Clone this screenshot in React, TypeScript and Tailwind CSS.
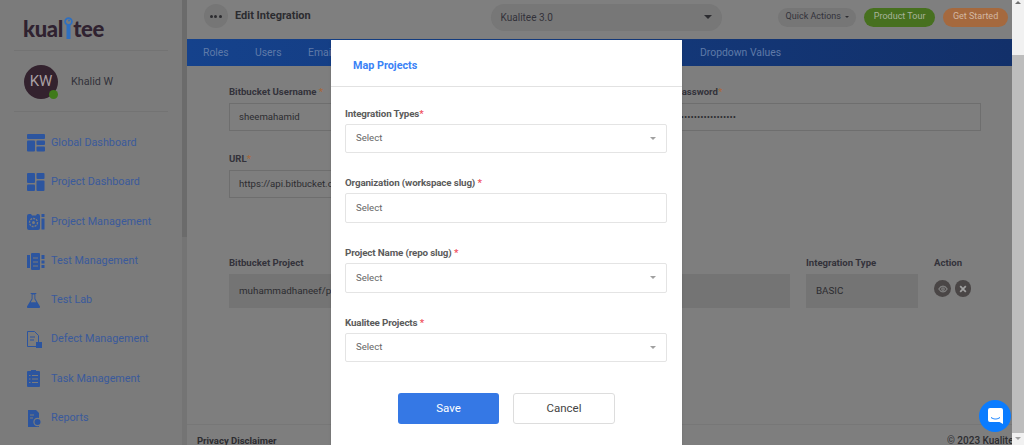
import React from 'react';

const BLUE = '#2c559f';

const navItems: { label: string; icon: React.ReactNode }[] = [
  {
    label: 'Global Dashboard',
    icon: (
      <svg width="18" height="18" viewBox="0 0 18 18" fill={BLUE}>
        <rect x="0" y="0" width="18" height="5" rx="1" />
        <rect x="0" y="6.5" width="8" height="11" rx="1" />
        <rect x="9.5" y="6.5" width="8.5" height="4.5" rx="1" />
        <rect x="9.5" y="12.5" width="8.5" height="5" rx="1" />
      </svg>
    ),
  },
  {
    label: 'Project Dashboard',
    icon: (
      <svg width="18" height="18" viewBox="0 0 18 18" fill={BLUE}>
        <rect x="0" y="0" width="8" height="10" rx="1" />
        <rect x="0" y="11.5" width="8" height="6.5" rx="1" />
        <rect x="9.5" y="0" width="8" height="6" rx="1" />
        <rect x="9.5" y="7.5" width="8" height="10.5" rx="1" />
      </svg>
    ),
  },
  {
    label: 'Project Management',
    icon: (
      <svg width="18" height="18" viewBox="0 0 18 18" fill={BLUE}>
        <path d="M0 3a2 2 0 0 1 2-2h2l1 1.500h4L10 1h1a2 2 0 0 1 2 2v12a2 2 0 0 1-2 2H2a2 2 0 0 1-2-2z" />
        <circle cx="6.500" cy="9.500" r="4" fill="none" stroke="#7b7b7b" strokeWidth="1.300" strokeDasharray="2 1" />
        <circle cx="6.500" cy="9.500" r="1.500" fill="#7b7b7b" />
        <rect x="14.500" y="1" width="3" height="3" />
        <rect x="14.500" y="5.500" width="3" height="11" />
      </svg>
    ),
  },
  {
    label: 'Test Management',
    icon: (
      <svg width="18" height="18" viewBox="0 0 18 18" fill={BLUE}>
        <rect x="0" y="3" width="3" height="13" />
        <rect x="4" y="1" width="9" height="17" rx="1" />
        <rect x="14.500" y="3" width="3" height="4" />
        <rect x="14.500" y="8.500" width="3" height="3" />
        <rect x="14.500" y="13" width="3" height="3" />
        <path d="M6 6h5M6 10h5M6 14h5" stroke="#7b7b7b" strokeWidth="1.200" />
      </svg>
    ),
  },
  {
    label: 'Test Lab',
    icon: (
      <svg width="13" height="15" viewBox="0 0 14 16" fill={BLUE}>
        <path d="M4 0h6v1H9v5l5 8.500a1 1 0 0 1-1 1.500H1a1 1 0 0 1-1-1.500L5 6V1H4z" />
        <path d="M6 1.500h2v5l2 3.500H4l2-3.500z" fill="#7b7b7b" />
      </svg>
    ),
  },
  {
    label: 'Defect Management',
    icon: (
      <svg width="16" height="17" viewBox="0 0 16 17" fill="none" stroke={BLUE} strokeWidth="1">
        <path d="M.5.500h7l4 4v11h-11z" />
        <path d="M3 6h5M3 9h4" />
        <rect x="9.500" y="11.500" width="5" height="5" fill={BLUE} />
      </svg>
    ),
  },
  {
    label: 'Task Management',
    icon: (
      <svg width="14" height="17" viewBox="0 0 14 17" fill={BLUE}>
        <rect x="0" y="1" width="13" height="16" rx="1" />
        <rect x="4" y="0" width="5" height="2" />
        <path d="M5 5.500h6M5 9h6M5 12.500h6M2 5.500h1.500M2 9h1.500M2 12.500h1.500" stroke="#7b7b7b" strokeWidth="1.200" />
      </svg>
    ),
  },
  {
    label: 'Reports',
    icon: (
      <svg width="15" height="17" viewBox="0 0 15 17" fill={BLUE}>
        <path d="M1 0h8l3 3v14H1z" />
        <circle cx="10.500" cy="12" r="4.200" fill="#7b7b7b" />
        <circle cx="10.500" cy="12" r="3" />
        <path d="M3 5h4M3 8h3" stroke="#7b7b7b" strokeWidth="1.200" />
      </svg>
    ),
  },
];

const Sidebar = () => (
  <aside className="w-[182px] shrink-0 bg-[#7b7b7b] px-[14px]">
    <div className="h-[51px] border-b border-[#737373] pl-[9px] pt-[17px]">
      <div className="flex items-end h-[24px] text-[#2f2230] text-[22px] leading-[24px] font-black font-['Lato',sans-serif] tracking-[-0.3px]">
        kual
        <svg width="9" height="24" viewBox="0 0 9 24" className="mx-[0.5px] shrink-0" fill="none">
          <circle cx="4.500" cy="4.500" r="3.400" stroke="#2e6fc0" strokeWidth="1.800" />
          <circle cx="5" cy="3.500" r="1" fill="#2e6fc0" />
          <rect x="2.500" y="8" width="4" height="14" fill="#2e6fc0" />
        </svg>
        tee
      </div>
    </div>
    <div className="h-[61px] border-b border-[#737373] flex items-center pl-[10px] pt-[1px] gap-[13px]">
      <div className="relative w-[34px] h-[34px] rounded-full bg-[#33222e] flex items-center justify-center text-[#a89fa3] text-[15px]">
        KW
        <span className="absolute right-0 bottom-0 w-[9px] h-[9px] rounded-full bg-[#3f7a1a]" />
      </div>
      <span className="text-[#33323a] text-[10.800px] pt-[1px]">Khalid W</span>
    </div>
    <nav className="pl-[13px] pt-[11.400px] flex flex-col">
      {navItems.map((item) => (
        <div key={item.label} className="h-[39.300px] flex items-center shrink-0">
          <div className="w-[24px] flex items-center">{item.icon}</div>
          <span className="text-[#3a5a9c] text-[10.800px] whitespace-nowrap">{item.label}</span>
        </div>
      ))}
    </nav>
  </aside>
);

const Field = ({ label, value, className }: { label: React.ReactNode; value: string; className: string }) => (
  <div className={className}>
    <div className="text-[9.600px] leading-[12px] font-bold text-[#33323a] mb-[5px]">{label}</div>
    <div className="h-[28px] border border-[#6e6e6e] px-[9px] flex items-center text-[9.600px] text-[#2c2c30] whitespace-nowrap overflow-hidden">
      {value}
    </div>
  </div>
);

const Cell = ({ title, value, className }: { title: string; value: string; className: string }) => (
  <div className={className}>
    <div className="text-[9.600px] leading-[12px] font-bold text-[#33323a] mb-[5px]">{title}</div>
    <div className="h-[34px] bg-[#747474] px-[10px] flex items-center text-[9.800px] text-[#2c2c30]">{value}</div>
  </div>
);

const Main = () => (
  <main className="flex-1 flex flex-col min-w-0 bg-[#7e7e7e]">
    <header className="h-[39px] shrink-0 bg-[#7f7f7f] flex items-center pl-[17px] pr-[4px] pb-[5px]">
      <div className="w-[24px] h-[24px] mb-[2px] rounded-full bg-[#767676] flex items-center justify-center text-[#2c2c30] gap-[1.500px]">
        <span className="w-[3px] h-[3px] rounded-full bg-[#2c2c30]" />
        <span className="w-[3px] h-[3px] rounded-full bg-[#2c2c30]" />
        <span className="w-[3px] h-[3px] rounded-full bg-[#2c2c30]" />
      </div>
      <span className="ml-[7px] mb-[2px] text-[11px] font-bold text-[#2c2c30] w-[256px]">Edit Integration</span>
      <div className="w-[232px] h-[27px] rounded-full bg-[#777777] flex items-center justify-between pl-[10px] pr-[10px] text-[10px] text-[#33323a]">
        Kualitee 3.0
        <span className="border-x-[4px] border-t-[4px] border-x-transparent border-t-[#2c2c30]" />
      </div>
      <div className="ml-[56px] w-[78px] h-[19px] rounded-full bg-[#767676] flex items-center justify-center gap-[4px] text-[9px] text-[#33323a]">
        Quick Actions
        <span className="border-x-[2.500px] border-t-[2.500px] border-x-transparent border-t-[#2c2c30]" />
      </div>
      <div className="ml-[8px] w-[71px] h-[19px] rounded-full bg-[#47701f] flex items-center justify-center text-[9px] text-[#a9b49c]">
        Product Tour
      </div>
      <div className="ml-[8px] w-[65px] h-[19px] rounded-full bg-[#a5693e] flex items-center justify-center text-[9px] text-[#d3b8a2]">
        Get Started
      </div>
    </header>
    <div className="h-[27px] shrink-0 bg-linear-to-r from-[#15428c] to-[#12306a] flex items-center text-[10.400px] text-[#5f7aa8] pl-[16px]">
      <span className="w-[52px]">Roles</span>
      <span className="w-[53px]">Users</span>
      <span className="w-[392px]">Email</span>
      <span>Dropdown Values</span>
    </div>
    <div className="flex-1 flex flex-col pl-[42px] pr-[31px] pt-[20px]">
      <div className="flex justify-between">
        <Field
          className="w-[349px]"
          label={<>Bitbucket Username <span className="text-[#a5693e]">*</span></>}
          value="sheemahamid"
        />
        <Field
          className="w-[349px]"
          label={<>Bitbucket Password<span className="text-[#a5693e]">*</span></>}
          value="•••••••••••••••••••••••••••••"
        />
      </div>
      <div className="flex mt-[22px]">
        <Field
          className="w-[349px]"
          label={<>URL<span className="text-[#a5693e]">*</span></>}
          value="https://api.bitbucket.org/2.0"
        />
      </div>
      <div className="flex mt-[59px] mr-[-21px]">
        <Cell className="w-[561px] mr-[16px]" title="Bitbucket Project" value="muhammadhaneef/project" />
        <Cell className="w-[112px] mr-[16px]" title="Integration Type" value="BASIC" />
        <div className="flex-1">
          <div className="text-[9.600px] leading-[12px] font-bold text-[#33323a] mb-[5px]">Action</div>
          <div className="flex gap-[4px] pt-[6px]">
            <span className="w-[17px] h-[17px] rounded-full bg-[#4a4646] flex items-center justify-center">
              <svg width="10" height="10" viewBox="0 0 24 24" fill="none" stroke="#7e7e7e" strokeWidth="3">
                <path d="M2 12s4-7 10-7 10 7 10 7-4 7-10 7-10-7-10-7z" />
                <circle cx="12" cy="12" r="3" />
              </svg>
            </span>
            <span className="w-[16px] h-[17px] rounded-full bg-[#4a4646] flex items-center justify-center">
              <svg width="8" height="8" viewBox="0 0 10 10" stroke="#a0a0a0" strokeWidth="2.200">
                <path d="M1.500 1.500l7 7M8.500 1.500l-7 7" />
              </svg>
            </span>
          </div>
        </div>
      </div>
    </div>
    <footer className="h-[21px] shrink-0 border-t border-[#777777] flex justify-between pl-[10px] pt-[10px] text-[9.500px] leading-[12px] font-bold text-[#2c2c30] whitespace-nowrap overflow-hidden">
      <span>Privacy Disclaimer</span>
      <span className="text-[10px] font-medium w-[65px] overflow-hidden">© 2023 Kualitee</span>
    </footer>
  </main>
);

const ModalField = ({ label, sep, select, mt }: { label: string; sep: string; select: boolean; mt: string }) => (
  <div className={mt}>
    <div className="text-[9.800px] leading-[13px] font-bold tracking-[-0.15px] text-[#5b5b5b]">
      {label}
      {sep}
      <span className="text-[#f0525f]">*</span>
    </div>
    <div className="mt-[4px] h-[29.700px] border border-[#e4e4e4] rounded-[2px] flex items-center justify-between pl-[10px] pr-[10px] text-[9.600px] text-[#666666]">
      Select
      {select && <span className="border-x-[3px] border-t-[3px] border-x-transparent border-t-[#a0a0a0]" />}
    </div>
  </div>
);

const Modal = () => (
  <div className="absolute left-[331px] top-[40px] w-[351px] h-[405px] bg-white shadow-sm">
    <div className="h-[47px] border-b border-[#e2e2e2] flex items-center pl-[22px] pt-[6px] text-[10.800px] font-bold text-[#3b82f6]">
      Map Projects
    </div>
    <div className="px-[14px] pr-[15px]">
      <ModalField mt="mt-[19.700px]" label="Integration Types" sep="" select />
      <ModalField mt="mt-[23px]" label="Organization (workspace slug)" sep=" " select={false} />
      <ModalField mt="mt-[23px]" label="Project Name (repo slug)" sep=" " select />
      <ModalField mt="mt-[23px]" label="Kualitee Projects" sep=" " select />
      <div className="flex gap-[14px] justify-center mt-[30.300px] pl-[1px]">
        <button className="w-[101px] h-[31px] pt-[1px] rounded-[3px] bg-[#3578e5] text-white text-[11.500px]">Save</button>
        <button className="w-[102px] h-[31px] pt-[1px] rounded-[3px] border border-[#dddddd] text-[#444444] text-[11.500px]">Cancel</button>
      </div>
    </div>
  </div>
);

export default function App() {
  return (
    <div className="relative w-[1024px] h-[445px] overflow-hidden flex bg-[#7e7e7e] font-['Roboto',sans-serif]">
      <Sidebar />
      <div className="w-[5px] shrink-0 bg-[#747474]">
        <div className="h-[237px] bg-[#6b6b6b]" />
      </div>
      <Main />
      <div className="w-[12px] shrink-0 flex flex-col bg-[#f1f1f1] items-center">
        <div className="h-[55px] shrink-0 pt-[1px]">
          <span className="block border-x-[3px] border-b-[3px] border-x-transparent border-b-[#707070]" />
        </div>
        <div className="h-[378px] shrink-0 w-full bg-[#bdbdbd]" />
        <div className="pt-[4px]">
          <span className="block border-x-[3px] border-t-[3px] border-x-transparent border-t-[#a0a0a0]" />
        </div>
      </div>
      <Modal />
      <div className="absolute left-[979px] top-[400px] w-[32px] h-[32px] rounded-full bg-[#0a7cff] flex items-center justify-center">
        <svg width="15" height="16" viewBox="0 0 15 16" fill="white">
          <path d="M2 0h11a2 2 0 0 1 2 2v14l-3.500-2H2a2 2 0 0 1-2-2V2a2 2 0 0 1 2-2z" />
          <path d="M3 9.500c3 2 6 2 9 0" stroke="#0a7cff" strokeWidth="1" fill="none" />
        </svg>
      </div>
    </div>
  );
}
